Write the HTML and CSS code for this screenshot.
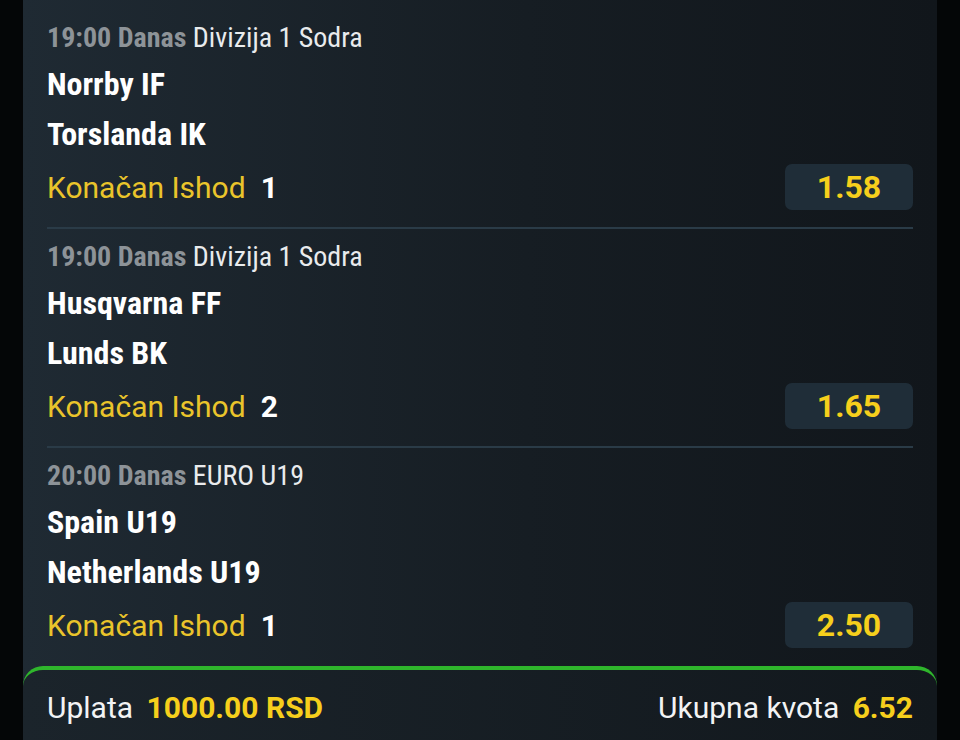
FILE: index.html
```html
<!DOCTYPE html>
<html lang="sr">
<head>
  <meta charset="UTF-8" />
  <title>Tiket</title>
  <link rel="stylesheet" href="styles.css">
</head>
<body>
  <div class="panel">
    <div class="ticket-list">

      <div class="bet">
        <div class="bet-info"><b>19:00 Danas</b> Divizija 1 Sodra</div>
        <div class="team">Norrby IF</div>
        <div class="team">Torslanda IK</div>
        <div class="market">
          <span class="market-name">Konačan Ishod</span>
          <span class="pick">1</span>
          <span class="odd">1.58</span>
        </div>
      </div>

      <div class="bet">
        <div class="bet-info"><b>19:00 Danas</b> Divizija 1 Sodra</div>
        <div class="team">Husqvarna FF</div>
        <div class="team">Lunds BK</div>
        <div class="market">
          <span class="market-name">Konačan Ishod</span>
          <span class="pick">2</span>
          <span class="odd">1.65</span>
        </div>
      </div>

      <div class="bet last">
        <div class="bet-info"><b>20:00 Danas</b> EURO U19</div>
        <div class="team">Spain U19</div>
        <div class="team">Netherlands U19</div>
        <div class="market">
          <span class="market-name">Konačan Ishod</span>
          <span class="pick">1</span>
          <span class="odd">2.50</span>
        </div>
      </div>

    </div>

    <div class="summary">
      <div class="stake">Uplata <b>1000.00 RSD</b></div>
      <div class="total">Ukupna kvota <b>6.52</b></div>
    </div>
  </div>
</body>
</html>
```

FILE: styles.css
```css
body { margin: 0; background: #040607; font-family: Roboto, "Liberation Sans", sans-serif; color: #eef0f2; }

.panel {
  width: 914px;
  height: 740px;
  margin-left: 23px;
  background: linear-gradient(to right, #1f2a33, #161d23 55%, #11161b);
  display: flex;
  flex-direction: column;
  overflow: hidden;
}

.ticket-list { padding: 10px 24px 0; flex: 1; }

.bet {
  padding: 10px 0 14px;
  border-bottom: 2px solid #2a3b47;
}
.bet.last { border-bottom: none; }

.bet-info {
  height: 36px;
  line-height: 36px;
  font-family: "Roboto Condensed", "DejaVu Sans Condensed", sans-serif;
  font-size: 28px;
  color: #e9ebed;
}
.bet-info b { color: #8d9398; font-weight: bold; }

.team {
  height: 50px;
  line-height: 50px;
  font-family: "Roboto Condensed", "DejaVu Sans Condensed", sans-serif;
  font-weight: bold;
  font-size: 32px;
  color: #fff;
}
.bet-info + .team { margin-top: 3px; }

.market {
  display: flex;
  align-items: center;
  height: 52px;
  margin-top: 2px;
  font-size: 30px;
}
.market-name { color: #eac42b; }
.pick { color: #fff; font-weight: bold; margin-left: 15px; }
.odd {
  margin-left: auto;
  width: 128px;
  height: 46px;
  line-height: 46px;
  text-align: center;
  border-radius: 7px;
  background: #1f2d38;
  color: #f6cf1c;
  font-weight: bold;
  font-size: 32px;
}

.summary {
  height: 70px;
  border-top: 4px solid #2fb62c;
  border-radius: 20px 20px 0 0;
  background: linear-gradient(to right, #1b242b, #12181d);
  display: flex;
  align-items: center;
  justify-content: space-between;
  padding: 5px 24px 0;
  box-sizing: border-box;
  height: 74px;
  font-size: 30px;
  color: #f2f3f4;
}
.summary b { color: #f6cf1c; margin-left: 6px; }
```
